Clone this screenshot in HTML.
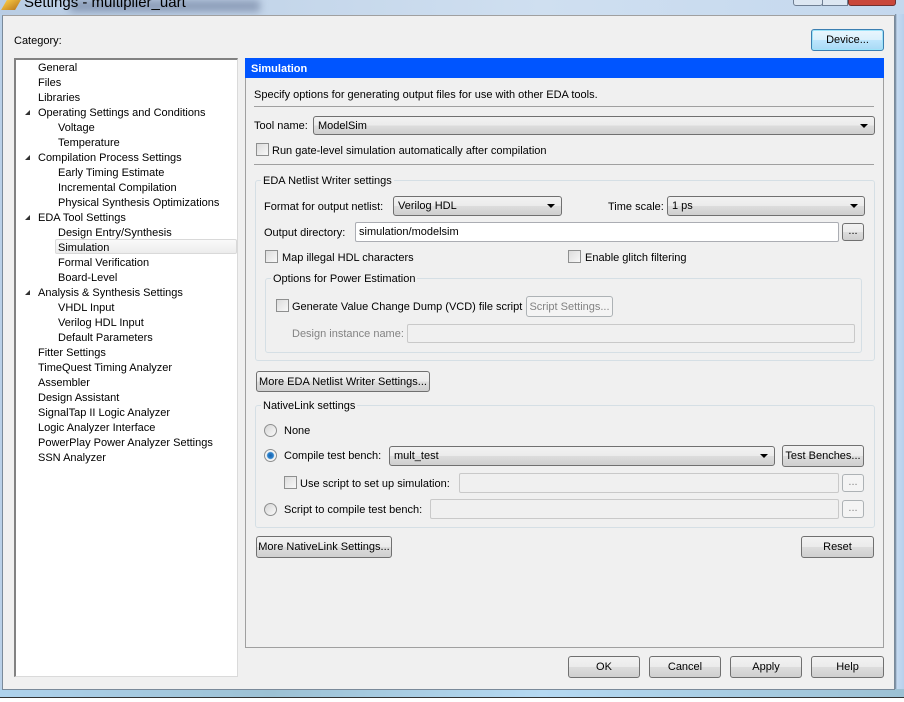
<!DOCTYPE html>
<html><head><meta charset="utf-8"><style>
*{box-sizing:border-box;margin:0;padding:0}
body{width:904px;height:702px;overflow:hidden;background:#fff;font-family:"Liberation Sans",sans-serif;font-size:11px;color:#000;position:relative}
.a{position:absolute}
.t{position:absolute;white-space:nowrap;line-height:13px;margin-top:1px}
.btn{position:absolute;border:1px solid #707070;border-radius:3px;background:linear-gradient(#f2f2f2,#ebebeb 50%,#dddddd 50%,#cfcfcf);text-align:center;line-height:20px;white-space:nowrap}
.dis{border-color:#adb2b5;background:#f4f4f4;color:#838383}
.cb{position:absolute;width:13px;height:13px;border:1px solid #8e8f8f;background:linear-gradient(135deg,#dcdcdc,#f8f8f8)}
.rd{position:absolute;width:13px;height:13px;border:1px solid #8e8f8f;border-radius:50%;background:linear-gradient(135deg,#d6d6d6,#fafafa)}
.cmb{position:absolute;border:1px solid #707070;border-radius:3px;background:linear-gradient(#f2f2f2,#ebebeb 50%,#dddddd 50%,#cfcfcf);padding-left:4px;line-height:18px}
.cmb:after{content:"";position:absolute;right:6px;top:7px;border-left:4px solid transparent;border-right:4px solid transparent;border-top:4px solid #000}
.in{position:absolute;border:1px solid #abadb3;border-radius:2px;background:#fff;padding-left:3px;line-height:18px}
.ind{border-color:#c9c9c9;background:#f0f0f0}
.grp{position:absolute;border:1px solid #d5dfe5;border-radius:3px}
.gl{position:absolute;background:#f0f0f0;padding:0 2px;line-height:13px;white-space:nowrap;margin-top:1px}
.tri{position:absolute;width:0;height:0;border-left:5px solid transparent;border-bottom:5px solid #333}
</style></head><body>
<div class="a" style="left:0;top:0;width:904px;height:16px;background:linear-gradient(90deg,#b9cde4,#cfdff0 60%,#c4d8ee)"></div>
<div class="a" style="left:70px;top:0;width:190px;height:12px;background:#6a7a9a;filter:blur(4px);opacity:.6"></div>
<div class="t" style="left:24px;top:-7px;font-size:15px;line-height:17px;color:#000">Settings - multiplier_uart</div>
<div class="a" style="left:4px;top:0;width:14px;height:10px;background:linear-gradient(135deg,#f5c542,#c08020);transform:skewX(-30deg)"></div>
<div class="a" style="left:793px;top:-10px;width:30px;height:16px;border:1px solid #6f7f93;border-radius:3px;background:#dde7f2"></div>
<div class="a" style="left:822px;top:-10px;width:26px;height:16px;border:1px solid #6f7f93;background:#dde7f2"></div>
<div class="a" style="left:848px;top:-10px;width:48px;height:16px;border:1px solid #6f3030;border-radius:3px;background:#c9473a"></div>
<div class="a" style="left:0;top:14px;width:3px;height:680px;background:#b9d0e8"></div>
<div class="a" style="left:895px;top:14px;width:9px;height:680px;background:linear-gradient(90deg,#6a7c90,#c4daf1 2px,#b7d0ec)"></div>
<div class="a" style="left:0;top:689px;width:904px;height:9px;background:linear-gradient(90deg,#aed2ec,#9cc1d4 30%,#b5d9f2 60%,#9cc1d4)"></div>
<div class="a" style="left:0;top:697px;width:904px;height:1px;background:#333"></div>
<div class="a" style="left:2px;top:15px;width:893px;height:675px;background:#f0f0f0;border:1px solid #7a8a9a;border-top:1px solid #a0a0a0"></div>
<div class="t" style="left:14px;top:34px">Category:</div>
<div class="btn" style="left:811px;top:29px;width:73px;height:22px;border-color:#3c7fb1;background:linear-gradient(#eaf6fd,#d9f0fc 50%,#bee6fd 50%,#a7d9f5);box-shadow:inset 0 0 0 1px #9de3f9">Device...</div>
<div class="a" style="left:14px;top:58px;width:224px;height:619px;background:#fff;border:1px solid #dadada;border-left:2px solid #828282;border-top:2px solid #828282"></div>
<div class="a" style="left:55px;top:239px;width:182px;height:15px;border:1px solid #d9d9d9;border-radius:2px;background:linear-gradient(#fafafa,#ececec)"></div>
<div class="t" style="left:38px;top:61px">General</div>
<div class="t" style="left:38px;top:76px">Files</div>
<div class="t" style="left:38px;top:91px">Libraries</div>
<div class="tri" style="left:25px;top:110px"></div><div class="t" style="left:38px;top:106px">Operating Settings and Conditions</div>
<div class="t" style="left:58px;top:121px">Voltage</div>
<div class="t" style="left:58px;top:136px">Temperature</div>
<div class="tri" style="left:25px;top:155px"></div><div class="t" style="left:38px;top:151px">Compilation Process Settings</div>
<div class="t" style="left:58px;top:166px">Early Timing Estimate</div>
<div class="t" style="left:58px;top:181px">Incremental Compilation</div>
<div class="t" style="left:58px;top:196px">Physical Synthesis Optimizations</div>
<div class="tri" style="left:25px;top:215px"></div><div class="t" style="left:38px;top:211px">EDA Tool Settings</div>
<div class="t" style="left:58px;top:226px">Design Entry/Synthesis</div>
<div class="t" style="left:58px;top:241px">Simulation</div>
<div class="t" style="left:58px;top:256px">Formal Verification</div>
<div class="t" style="left:58px;top:271px">Board-Level</div>
<div class="tri" style="left:25px;top:290px"></div><div class="t" style="left:38px;top:286px">Analysis &amp; Synthesis Settings</div>
<div class="t" style="left:58px;top:301px">VHDL Input</div>
<div class="t" style="left:58px;top:316px">Verilog HDL Input</div>
<div class="t" style="left:58px;top:331px">Default Parameters</div>
<div class="t" style="left:38px;top:346px">Fitter Settings</div>
<div class="t" style="left:38px;top:361px">TimeQuest Timing Analyzer</div>
<div class="t" style="left:38px;top:376px">Assembler</div>
<div class="t" style="left:38px;top:391px">Design Assistant</div>
<div class="t" style="left:38px;top:406px">SignalTap II Logic Analyzer</div>
<div class="t" style="left:38px;top:421px">Logic Analyzer Interface</div>
<div class="t" style="left:38px;top:436px">PowerPlay Power Analyzer Settings</div>
<div class="t" style="left:38px;top:451px">SSN Analyzer</div>
<div class="a" style="left:245px;top:58px;width:639px;height:590px;border:1px solid #a0a0a0;border-top:0"></div>
<div class="a" style="left:245px;top:58px;width:639px;height:20px;background:#0055ff"></div>
<div class="t" style="left:251px;top:62px;color:#fff;font-weight:bold">Simulation</div>
<div class="t" style="left:254px;top:88px">Specify options for generating output files for use with other EDA tools.</div>
<div class="a" style="left:254px;top:106px;width:620px;height:1px;background:#a0a0a0"></div>
<div class="t" style="left:254px;top:119px">Tool name:</div>
<div class="cmb" style="left:313px;top:116px;width:562px;height:19px">ModelSim</div>
<div class="cb" style="left:256px;top:143px"></div><div class="t" style="left:272px;top:144px">Run gate-level simulation automatically after compilation</div>
<div class="a" style="left:254px;top:164px;width:620px;height:1px;background:#a0a0a0"></div>
<div class="grp" style="left:255px;top:180px;width:620px;height:181px"></div>
<div class="gl" style="left:261px;top:174px">EDA Netlist Writer settings</div>
<div class="t" style="left:264px;top:200px">Format for output netlist:</div>
<div class="cmb" style="left:393px;top:196px;width:169px;height:20px">Verilog HDL</div>
<div class="t" style="left:608px;top:200px">Time scale:</div>
<div class="cmb" style="left:667px;top:196px;width:198px;height:20px">1 ps</div>
<div class="t" style="left:264px;top:226px">Output directory:</div>
<div class="in" style="left:355px;top:222px;width:484px;height:20px">simulation/modelsim</div>
<div class="btn" style="left:842px;top:223px;width:22px;height:18px;line-height:14px">...</div>
<div class="cb" style="left:265px;top:250px"></div><div class="t" style="left:282px;top:251px">Map illegal HDL characters</div>
<div class="cb" style="left:568px;top:250px"></div><div class="t" style="left:585px;top:251px">Enable glitch filtering</div>
<div class="grp" style="left:265px;top:278px;width:597px;height:75px"></div>
<div class="gl" style="left:271px;top:272px">Options for Power Estimation</div>
<div class="cb" style="left:276px;top:299px"></div><div class="t" style="left:292px;top:300px">Generate Value Change Dump (VCD) file script</div>
<div class="btn dis" style="left:526px;top:296px;width:87px;height:21px">Script Settings...</div>
<div class="t" style="left:292px;top:327px;color:#838383">Design instance name:</div>
<div class="in ind" style="left:407px;top:324px;width:448px;height:19px"></div>
<div class="btn" style="left:256px;top:371px;width:174px;height:21px">More EDA Netlist Writer Settings...</div>
<div class="grp" style="left:255px;top:405px;width:620px;height:123px"></div>
<div class="gl" style="left:261px;top:399px">NativeLink settings</div>
<div class="rd" style="left:264px;top:424px"></div><div class="t" style="left:284px;top:424px">None</div>
<div class="rd" style="left:264px;top:449px;background:radial-gradient(circle,#1b5fa8 0,#2d85d0 3px,#f4f4f4 4px)"></div><div class="t" style="left:284px;top:449px">Compile test bench:</div>
<div class="cmb" style="left:389px;top:446px;width:386px;height:20px">mult_test</div>
<div class="btn" style="left:782px;top:445px;width:82px;height:22px">Test Benches...</div>
<div class="cb" style="left:284px;top:476px"></div><div class="t" style="left:300px;top:477px">Use script to set up simulation:</div>
<div class="in ind" style="left:459px;top:473px;width:380px;height:20px"></div>
<div class="btn dis" style="left:842px;top:474px;width:22px;height:18px;line-height:14px">...</div>
<div class="rd" style="left:264px;top:503px"></div><div class="t" style="left:284px;top:503px">Script to compile test bench:</div>
<div class="in ind" style="left:430px;top:499px;width:409px;height:20px"></div>
<div class="btn dis" style="left:842px;top:500px;width:22px;height:18px;line-height:14px">...</div>
<div class="btn" style="left:256px;top:536px;width:136px;height:22px">More NativeLink Settings...</div>
<div class="btn" style="left:801px;top:536px;width:73px;height:22px">Reset</div>
<div class="btn" style="left:568px;top:656px;width:72px;height:22px">OK</div>
<div class="btn" style="left:649px;top:656px;width:72px;height:22px">Cancel</div>
<div class="btn" style="left:730px;top:656px;width:72px;height:22px">Apply</div>
<div class="btn" style="left:811px;top:656px;width:73px;height:22px">Help</div>
</body></html>
